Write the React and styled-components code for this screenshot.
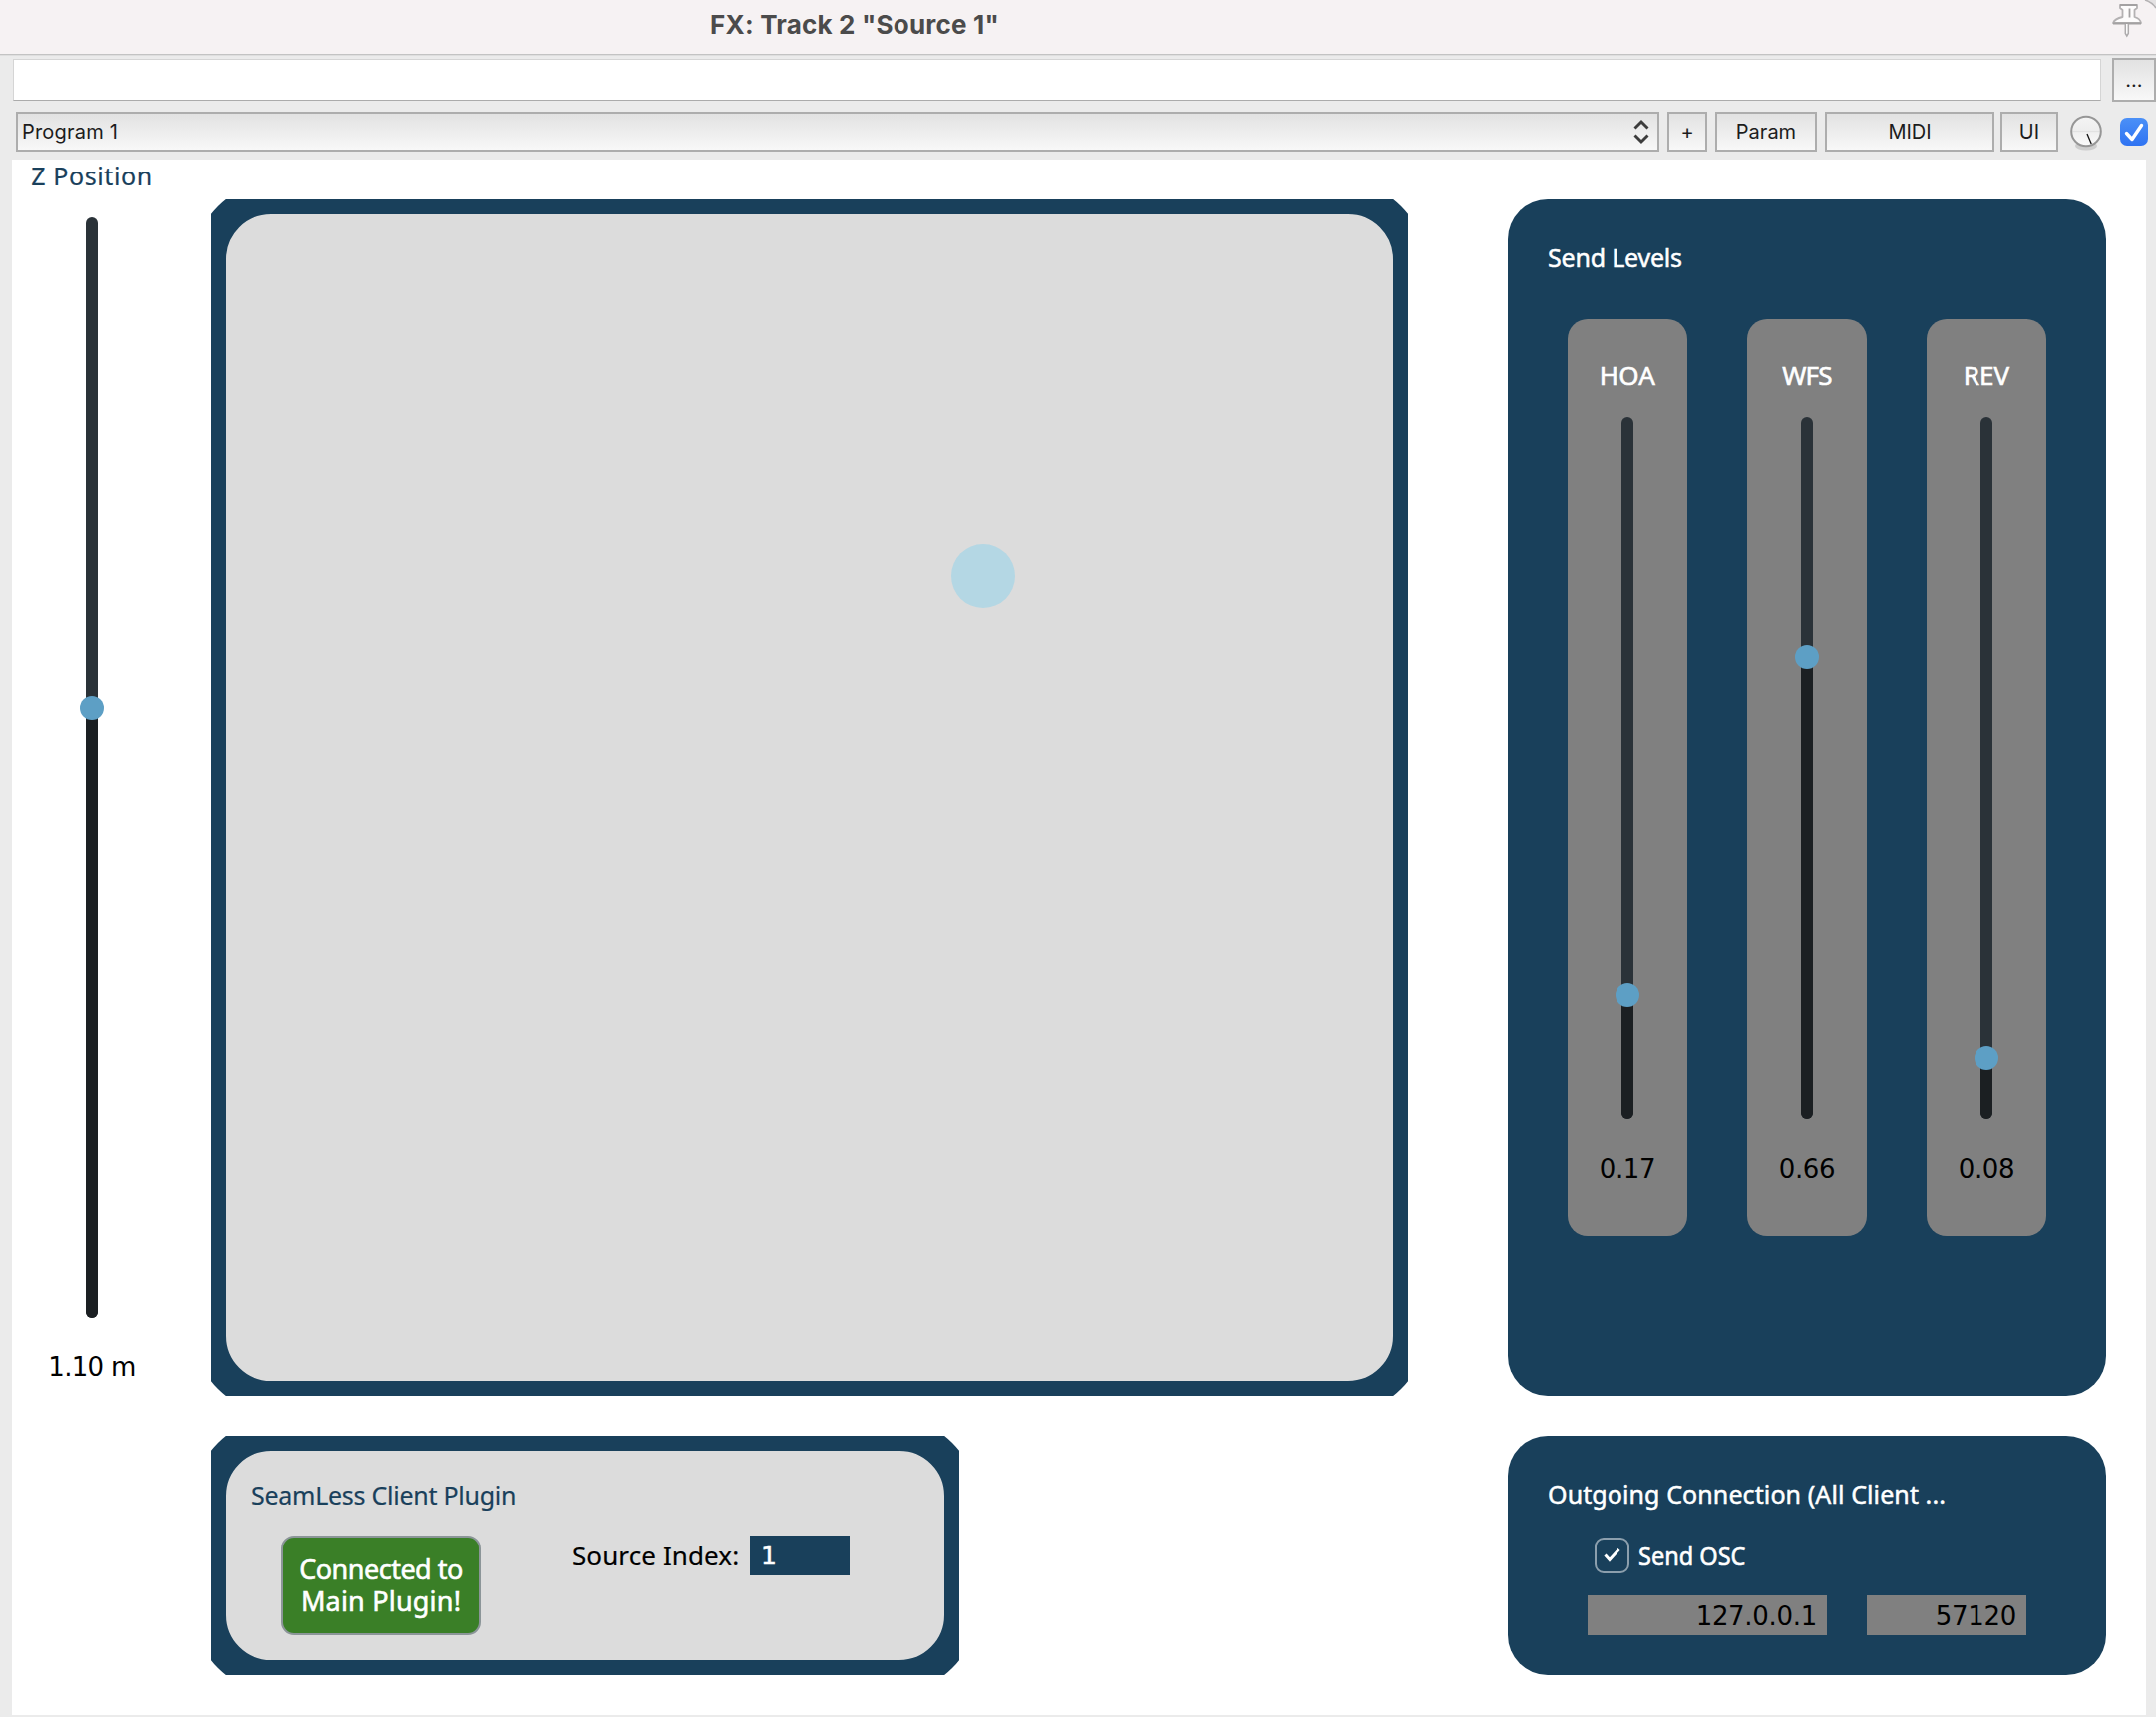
import React from "react";
import styled, { createGlobalStyle } from "styled-components";

const navy = "#19405b";
const ui = `Inter, "Liberation Sans", sans-serif`;
const humanist = `"Noto Sans", "Open Sans", sans-serif`;
const digits = `"DejaVu Sans", sans-serif`;

const Global = createGlobalStyle`
  * { box-sizing: border-box; }
  body { margin: 0; background: #ebebeb; font-family: ${humanist}; }
`;

const Window = styled.div`
  width: 2162px;
  height: 1722px;
  overflow: hidden;
  display: flex;
  flex-direction: column;
  background: #ebebeb;
`;

const TitleBar = styled.header`
  height: 56px;
  flex: none;
  display: grid;
  grid-template-columns: 1714px 1fr auto;
  background: #f6f2f3;
  border-bottom: 1px solid #dedede;
  box-shadow: inset 0 -1px 0 #c3c3c3;
`;

const Title = styled.h1`
  margin: 0;
  text-align: center;
  font: 700 26px/50px ${ui};
  color: #4b4b4b;
  letter-spacing: 0.2px;
`;

const PinSlot = styled.div`
  grid-column: 3;
  width: 44px;
  svg { display: block; }
`;

const NameRow = styled.div`
  flex: none;
  display: flex;
  justify-content: space-between;
  align-items: center;
  height: 44px;
  margin-top: 2px;
  padding-left: 13px;
`;

const NameField = styled.div`
  width: 2094px;
  height: 42px;
  background: #fff;
  border: 1px solid #d5d5d5;
  border-bottom-color: #ababab;
`;

const ToolRow = styled.div`
  flex: none;
  display: flex;
  height: 58px;
  padding: 10px 0 8px 16px;
`;

const Button = styled.div`
  display: flex;
  align-items: center;
  justify-content: ${(p) => (p.$spread ? "space-between" : "center")};
  width: ${(p) => p.$w}px;
  height: ${(p) => p.$h || 40}px;
  margin-right: ${(p) => p.$gap || 0}px;
  padding: ${(p) => (p.$spread ? "0 8px 0 4px" : "0")};
  border: 2px solid #adadad;
  background: linear-gradient(#e2e2e2, #f8f8f8);
  font: 400 20px/1 ${ui};
  letter-spacing: ${(p) => (p.$spread ? 0.2 : 0)}px;
  color: #1c1c1c;
`;

const KnobSlot = styled.div`
  width: 36px;
  height: 40px;
  margin: 0 16px 0 10px;
  svg { display: block; }
`;

const BlueCheck = styled.div`
  width: 28px;
  height: 28px;
  margin-top: 6px;
  border-radius: 7px;
  background: linear-gradient(#4b90f7, #2f73f2);
  svg { display: block; }
`;

const Plugin = styled.main`
  flex: none;
  width: 2140px;
  height: 1560px;
  margin-left: 12px;
  background: #fff;
  display: flex;
`;

const HeightColumn = styled.section`
  width: 160px;
  display: flex;
  flex-direction: column;
  align-items: center;
`;

const Middle = styled.section`
  margin-left: 40px;
  padding-top: 40px;
  width: 1200px;
  display: flex;
  flex-direction: column;
  gap: 40px;
`;

const Side = styled.section`
  margin-left: 100px;
  padding-top: 40px;
  width: 600px;
  display: flex;
  flex-direction: column;
  gap: 40px;
`;

const Heading = styled.h2`
  margin: 0;
  font: 400 25px/36px ${humanist};
  letter-spacing: ${(p) => p.$track || 0}px;
  white-space: nowrap;
  color: ${(p) => p.$color || "#fff"};
  -webkit-text-stroke: ${(p) => (p.$color ? 0.2 : 0.5)}px currentColor;
`;

const HeightHeading = styled(Heading)`
  height: 58px;
  line-height: 32px;
`;

const Reading = styled.div`
  font: 400 26px/36px ${digits};
  color: #000;
  text-align: center;
  white-space: nowrap;
  letter-spacing: ${(p) => p.$track || 0}px;
`;

const HeightReading = styled(Reading)`
  margin-top: 31px;
`;

const Track = styled.div`
  position: relative;
  width: 12px;
  height: ${(p) => p.$h}px;
  border-radius: 6px;
  background: #2a3238;
`;

const Level = styled.div`
  position: absolute;
  left: 0;
  bottom: 0;
  width: 12px;
  border-radius: 0 0 6px 6px;
  background: #1b1f22;
`;

const Thumb = styled.div`
  position: absolute;
  left: -6px;
  width: 24px;
  height: 24px;
  margin-bottom: -12px;
  border-radius: 50%;
  background: #5d9fc5;
`;

function Slider({ length, value }) {
  const pos = 6 + (length - 12) * value;
  return (
    <Track $h={length}>
      <Level style={{ height: pos }} />
      <Thumb style={{ bottom: pos }} />
    </Track>
  );
}

const Frame = styled.div`
  position: relative;
  overflow: hidden;
  width: ${(p) => p.$w}px;
  height: ${(p) => p.$h}px;
`;

const FrameFace = styled.div`
  width: calc(100% + 30px);
  height: calc(100% + 30px);
  margin: -15px;
  border: 30px solid ${navy};
  border-radius: 75px;
  background: #dcdcdc;
`;

const Puck = styled.div`
  position: absolute;
  left: 742px;
  top: 346px;
  width: 64px;
  height: 64px;
  border-radius: 50%;
  background: #b4d7e4;
`;

const ClientBody = styled.div`
  padding: 26px 0 0 25px;
`;

const ClientRow = styled.div`
  display: flex;
  align-items: flex-start;
  margin: 23px 0 0 30px;
`;

const Status = styled.div`
  width: 200px;
  height: 100px;
  padding-top: 16px;
  border: 2px solid #8b9598;
  border-radius: 13px;
  background: #3a7f27;
  color: #fff;
`;

const StatusLine = styled.div`
  text-align: center;
  font: 400 27px/32px ${humanist};
  letter-spacing: ${(p) => p.$track}px;
  -webkit-text-stroke: 0.6px #fff;
  white-space: nowrap;
`;

const Label = styled.span`
  font: 400 26px/40px ${humanist};
  letter-spacing: ${(p) => p.$track || 0}px;
  color: ${(p) => p.$color || "#000"};
  -webkit-text-stroke: ${(p) => (p.$color ? 0.6 : 0.2)}px currentColor;
  white-space: nowrap;
`;

const IndexLabel = styled(Label)`
  margin-left: 92px;
  width: 178px;
`;

const IndexField = styled.div`
  width: 100px;
  height: 40px;
  padding-left: 11px;
  background: ${navy};
  color: #fff;
  font: 400 25px/41px ${digits};
  -webkit-text-stroke: 0.5px #fff;
`;

const Card = styled.div`
  width: 600px;
  height: ${(p) => p.$h}px;
  border-radius: 40px;
  background: ${navy};
  padding: 40px 0 0 40px;
`;

const Strips = styled.div`
  display: flex;
  gap: 60px;
  margin: 44px 0 0 20px;
`;

const Strip = styled.div`
  width: 120px;
  height: 920px;
  border-radius: 20px;
  background: #808080;
  display: flex;
  flex-direction: column;
  align-items: center;
  padding-top: 36px;
`;

const StripName = styled(Label)`
  margin-bottom: 22px;
`;

const StripValue = styled(Reading)`
  margin-top: 32px;
`;

const OscRow = styled.div`
  display: flex;
  align-items: center;
  height: 40px;
  margin: 24px 0 0 47px;
  gap: 9px;
`;

const OscLabel = styled(Label)`
  transform: scaleX(0.905);
  transform-origin: left;
`;

const OscBox = styled.div`
  width: 35px;
  height: 36px;
  border: 2px solid #8c9fad;
  border-radius: 9px;
  svg { display: block; }
`;

const Fields = styled.div`
  display: flex;
  gap: 40px;
  margin: 20px 0 0 40px;
`;

const Field = styled.div`
  width: ${(p) => p.$w}px;
  height: 40px;
  padding-right: 10px;
  background: #808080;
  text-align: right;
  font: 400 26px/42px ${digits};
  letter-spacing: -0.3px;
  color: #000;
`;

const strips = [
  { name: "HOA", value: 0.17, track: 0.2 },
  { name: "WFS", value: 0.66, track: -0.8 },
  { name: "REV", value: 0.08, track: 0.1 },
];

function Pin() {
  return (
    <svg width="44" height="44" viewBox="0 0 44 44">
      <path d="M33 0Q40 2 44 8V0Z" fill="#e4e2e3" />
      <path d="M33 0Q40 2 44 8" fill="none" stroke="#b4b2b3" strokeWidth="1.500" />
      <path
        d="M8 5H25V8L22.500 10V17C26 18 28.500 20.500 29 23H1C2 20.500 6 18 10.500 17V10L8 8Z"
        fill="#fdfcfc" stroke="#b4b2b3" strokeWidth="1.800" strokeLinejoin="round"
      />
      <path d="M8 5H25M1 23.500H29" stroke="#a3a1a2" strokeWidth="1.800" />
      <path d="M13.300 24V33.500L14.800 36L16.300 33.500V24" fill="#fff" stroke="#adabac" strokeWidth="1.500" />
      <path d="M17.500 8.500V17.500" stroke="#a5a3a4" strokeWidth="1.800" />
    </svg>
  );
}

function Knob() {
  return (
    <svg width="36" height="40" viewBox="0 0 36 40">
      <defs>
        <linearGradient id="knob" x1="0" y1="0" x2="0" y2="1">
          <stop offset="0" stopColor="#f4f4f4" />
          <stop offset="0.49" stopColor="#ededed" />
          <stop offset="0.5" stopColor="#e2e2e2" />
          <stop offset="0.54" stopColor="#f0f0f0" />
          <stop offset="1" stopColor="#fafafa" />
        </linearGradient>
      </defs>
      <ellipse cx="18" cy="34" rx="11" ry="4.500" fill="#cdcdcd" />
      <circle cx="18" cy="19.500" r="14.800" fill="url(#knob)" stroke="#969696" strokeWidth="2" />
      <path d="M19 22L23.200 32" stroke="#111" strokeWidth="1.300" />
    </svg>
  );
}

export default function App() {
  return (
    <Window>
      <Global />
      <TitleBar>
        <Title>FX: Track 2 "Source 1"</Title>
        <PinSlot><Pin /></PinSlot>
      </TitleBar>
      <NameRow>
        <NameField />
        <Button $w={44} $h={44}>...</Button>
      </NameRow>
      <ToolRow>
        <Button $w={1648} $gap={8} $spread>
          Program 1
          <svg width="16" height="26" viewBox="0 0 16 26">
            <path d="M1.500 9.500L8 3L14.500 9.500M1.500 16.500L8 23L14.500 16.500" fill="none" stroke="#3c3c3c" strokeWidth="2.900" />
          </svg>
        </Button>
        <Button $w={40} $gap={8}>+</Button>
        <Button $w={102} $gap={8}>Param</Button>
        <Button $w={170} $gap={6}>MIDI</Button>
        <Button $w={58}>UI</Button>
        <KnobSlot><Knob /></KnobSlot>
        <BlueCheck>
          <svg width="28" height="28" viewBox="0 0 28 28">
            <path d="M6.500 15.500L12 21.500L21.500 7.500" fill="none" stroke="#fff" strokeWidth="3.400" strokeLinecap="round" strokeLinejoin="round" />
          </svg>
        </BlueCheck>
      </ToolRow>
      <Plugin>
        <HeightColumn>
          <HeightHeading $color={navy} $track={0.6}>Z Position</HeightHeading>
          <Slider length={1104} value={0.555} />
          <HeightReading $track={-0.7}>1.10 m</HeightReading>
        </HeightColumn>
        <Middle>
          <Frame $w={1200} $h={1200}>
            <FrameFace />
            <Puck />
          </Frame>
          <Frame $w={750} $h={240}>
            <FrameFace>
              <ClientBody>
                <Heading $color={navy} $track={-0.26}>SeamLess Client Plugin</Heading>
                <ClientRow>
                  <Status>
                    <StatusLine $track={-0.5}>Connected to</StatusLine>
                    <StatusLine $track={0.2}>Main Plugin!</StatusLine>
                  </Status>
                  <IndexLabel $track={0.1}>Source Index:</IndexLabel>
                  <IndexField>1</IndexField>
                </ClientRow>
              </ClientBody>
            </FrameFace>
          </Frame>
        </Middle>
        <Side>
          <Card $h={1200}>
            <Heading $track={-0.2}>Send Levels</Heading>
            <Strips>
              {strips.map((s) => (
                <Strip key={s.name}>
                  <StripName $color="#fff" $track={s.track}>{s.name}</StripName>
                  <Slider length={704} value={s.value} />
                  <StripValue $track={-0.3}>{s.value.toFixed(2)}</StripValue>
                </Strip>
              ))}
            </Strips>
          </Card>
          <Card $h={240}>
            <Heading $track={0.1}>Outgoing Connection (All Client ...</Heading>
            <OscRow>
              <OscBox>
                <svg width="31" height="32" viewBox="0 0 31 32">
                  <path d="M8.500 15.500L13 20.500L22.500 10" fill="none" stroke="#fff" strokeWidth="3" />
                </svg>
              </OscBox>
              <OscLabel $color="#fff">Send OSC</OscLabel>
            </OscRow>
            <Fields>
              <Field $w={240}>127.0.0.1</Field>
              <Field $w={160}>57120</Field>
            </Fields>
          </Card>
        </Side>
      </Plugin>
    </Window>
  );
}
